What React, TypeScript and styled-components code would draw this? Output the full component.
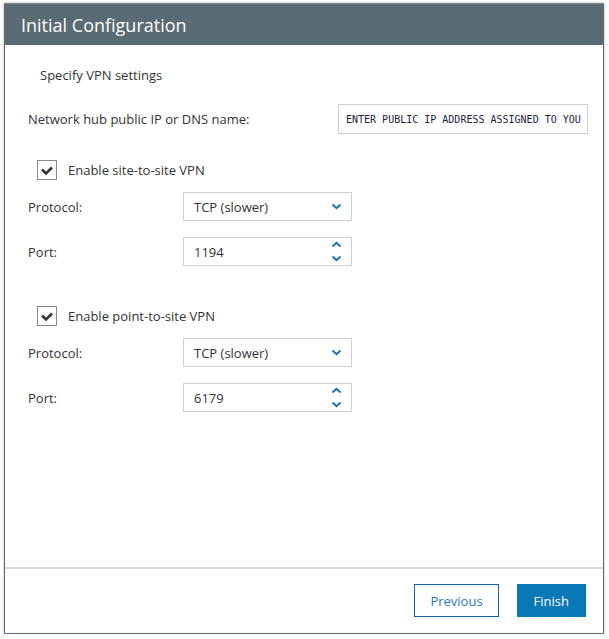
import React from "react";
import styled, { createGlobalStyle } from "styled-components";

const GlobalStyle = createGlobalStyle`
    html, body {
        margin: 0;
        padding: 0;
        background: #fff;
    }
    body {
        font-family: "Open Sans", "Noto Sans", sans-serif;
        font-size: 13px;
        color: #333;
    }
`;

const Dialog = styled.div`
    box-sizing: border-box;
    margin: 3px 0 0 4px;
    width: 600px;
    height: 631px;
    border: 1px solid #5f6e75;
    border-top: none;
    box-shadow: 0 0 2px rgba(0, 0, 0, 0.35);
    display: flex;
    flex-direction: column;
    background: #fff;
`;

const Header = styled.div`
    height: 42px;
    margin: 0 -1px;
    background: #5a6b73;
    border-top: 1px solid #7d8b91;
    box-sizing: border-box;
    display: flex;
    align-items: center;
    padding-left: 17px;
`;

const Title = styled.h1`
    margin: 0;
    font-size: 18px;
    font-weight: 400;
    color: #fff;
`;

const Body = styled.div`
    flex: 1;
    padding: 21px 15px 0 23px;
`;

const SectionTitle = styled.div`
    padding-left: 12px;
    line-height: 18px;
    margin-bottom: 20px;
`;

const HubRow = styled.div`
    display: flex;
    align-items: center;
    margin-bottom: 26px;
`;

const HubLabel = styled.label`
    width: 310px;
`;

const HubInput = styled.div`
    box-sizing: border-box;
    width: 250px;
    height: 30px;
    border: 1px solid #cfcfcf;
    display: flex;
    align-items: center;
    padding-left: 7px;
    font-family: "DejaVu Sans Mono", "Liberation Mono", monospace;
    font-size: 10px;
    color: #1b1b3a;
    white-space: nowrap;
    overflow: hidden;
`;

const Group = styled.div<{ $gapTop?: number }>`
    margin-top: ${p => p.$gapTop ?? 0}px;
    display: flex;
    flex-direction: column;
    gap: 12px;
`;

const CheckRow = styled.label`
    display: flex;
    align-items: center;
    gap: 11px;
    margin-left: 9px;
`;

const CheckBox = styled.span`
    box-sizing: border-box;
    width: 20px;
    height: 20px;
    border: 1px solid #8a8a8a;
    display: flex;
    align-items: center;
    justify-content: center;
`;

const FieldRow = styled.div<{ $gapTop?: number }>`
    display: flex;
    align-items: center;
    margin-top: ${p => p.$gapTop ?? 0}px;
`;

const FieldLabel = styled.span`
    width: 155px;
`;

const Control = styled.div`
    box-sizing: border-box;
    width: 169px;
    height: 29px;
    border: 1px solid #cfcfcf;
    display: flex;
    align-items: center;
    justify-content: space-between;
    padding: 0 9px 0 10px;
`;

const Spinner = styled.span`
    display: flex;
    flex-direction: column;
    align-items: center;
    gap: 7px;
`;

const Footer = styled.div`
    height: 66px;
    border-top: 2px solid #dcdcdc;
    box-sizing: border-box;
    display: flex;
    justify-content: flex-end;
    align-items: flex-start;
    gap: 18px;
    padding: 15px 17px 0 0;
`;

const Button = styled.button<{ $primary?: boolean }>`
    box-sizing: border-box;
    height: 33px;
    padding: 0 ${p => (p.$primary ? 16 : 15)}px;
    font-family: "Open Sans", "Noto Sans", sans-serif;
    font-size: 13px;
    border: 1px solid ${p => (p.$primary ? "#0a78b4" : "#1c5f9c")};
    background: ${p => (p.$primary ? "#0a78b4" : "#fff")};
    color: ${p => (p.$primary ? "#fff" : "#2a7ab4")};
    cursor: pointer;
`;

const Chevron: React.FC<{ up?: boolean }> = ({ up }) => (
    <svg width="11" height="7" viewBox="0 0 11 7">
        <path
            d={up ? "M1.5 5.5 L5.5 1.8 L9.5 5.5" : "M1.5 1.5 L5.5 5.2 L9.5 1.5"}
            fill="none"
            stroke="#1672b4"
            strokeWidth="2"
        />
    </svg>
);

const Check = () => (
    <svg width="14" height="11" viewBox="0 0 14 11">
        <path d="M2 4.5 L6 8.5 L12 2.5" fill="none" stroke="#333" strokeWidth="2.6" />
    </svg>
);

type VpnGroupProps = {
    label: string;
    port: string;
    gapTop?: number;
};

const VpnGroup: React.FC<VpnGroupProps> = ({ label, port, gapTop }) => (
    <Group $gapTop={gapTop}>
        <CheckRow>
            <CheckBox><Check /></CheckBox>
            {label}
        </CheckRow>
        <FieldRow>
            <FieldLabel>Protocol:</FieldLabel>
            <Control>
                <span>TCP (slower)</span>
                <Chevron />
            </Control>
        </FieldRow>
        <FieldRow $gapTop={4}>
            <FieldLabel>Port:</FieldLabel>
            <Control>
                <span>{port}</span>
                <Spinner>
                    <Chevron up />
                    <Chevron />
                </Spinner>
            </Control>
        </FieldRow>
    </Group>
);

export default function App() {
    return (
        <>
            <GlobalStyle />
            <Dialog>
                <Header>
                    <Title>Initial Configuration</Title>
                </Header>
                <Body>
                    <SectionTitle>Specify VPN settings</SectionTitle>
                    <HubRow>
                        <HubLabel>Network hub public IP or DNS name:</HubLabel>
                        <HubInput>ENTER PUBLIC IP ADDRESS ASSIGNED TO YOU</HubInput>
                    </HubRow>
                    <VpnGroup label="Enable site-to-site VPN" port="1194" />
                    <VpnGroup label="Enable point-to-site VPN" port="6179" gapTop={40} />
                </Body>
                <Footer>
                    <Button>Previous</Button>
                    <Button $primary>Finish</Button>
                </Footer>
            </Dialog>
        </>
    );
}
